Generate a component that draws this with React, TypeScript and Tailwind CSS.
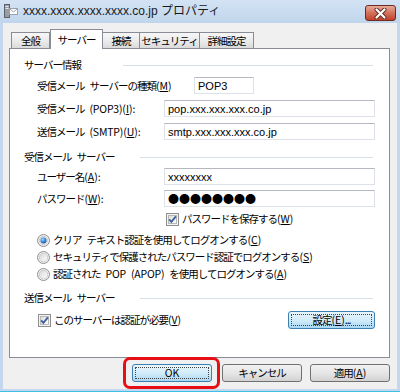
import React from "react";

function Check() {
  return (
    <svg width="13" height="13" viewBox="0 0 13 13" className="shrink-0">
      <defs>
        <linearGradient id="cbg" x1="0" y1="0" x2="1" y2="1">
          <stop offset="0" stopColor="#dcdcdc" />
          <stop offset="1" stopColor="#ffffff" />
        </linearGradient>
      </defs>
      <rect x="0.5" y="0.5" width="12" height="12" fill="#f4f4f4" stroke="#8e8f8f" />
      <rect x="2.5" y="2.5" width="8" height="8" fill="url(#cbg)" stroke="#b8b8b8" />
      <path d="M3.2 6.4 L5.4 8.9 L9.9 3.4" fill="none" stroke="#3c5d99" strokeWidth="1.8" />
    </svg>
  );
}

function Radio({ on }: { on?: boolean }) {
  return (
    <svg width="13" height="13" viewBox="0 0 13 13" className="shrink-0">
      <defs>
        <linearGradient id="rbg" x1="0" y1="0" x2="1" y2="1">
          <stop offset="0" stopColor="#d6d6d6" />
          <stop offset="1" stopColor="#ffffff" />
        </linearGradient>
        <radialGradient id="rdot" cx="0.4" cy="0.35" r="0.7">
          <stop offset="0" stopColor="#a9dcff" />
          <stop offset="0.5" stopColor="#3c8ce0" />
          <stop offset="1" stopColor="#164f9e" />
        </radialGradient>
      </defs>
      <circle cx="6.5" cy="6.5" r="6" fill="#f2f2f2" stroke="#8e8f8f" />
      <circle cx="6.5" cy="6.5" r="4.2" fill="url(#rbg)" stroke="#c4c4c4" strokeWidth="0.8" />
      {on && <circle cx="6.5" cy="6.5" r="3" fill="url(#rdot)" />}
    </svg>
  );
}

function Sp() {
  return <span className="inline-block w-[5px]" />;
}

function L({ children }: { children: React.ReactNode }) {
  return <span className="tracking-[-0.2px]">{children}</span>;
}

function K({ k }: { k: string }) {
  return (
    <span className="tracking-[0px]">
      (<u>{k}</u>)
    </span>
  );
}

function Tab({ label, w, sel }: { label: string; w: string; sel?: boolean }) {
  if (sel)
    return (
      <div
        className={`${w} relative z-10 -mb-px flex h-[20px] items-start justify-center whitespace-nowrap border border-b-0 border-[#898c95] bg-white pt-[2px] text-[10.5px] leading-[15px]`}
      >
        {label}
      </div>
    );
  return (
    <div
      className={`${w} -ml-px flex h-[16px] items-center justify-center whitespace-nowrap border border-b-0 border-[#898c95] bg-gradient-to-b from-[#f6f6f6] via-[#ececec] to-[#dadada] text-[10.5px] leading-[15px] first:ml-0`}
    >
      {label}
    </div>
  );
}

function Header({ children, line }: { children: React.ReactNode; line: string }) {
  return (
    <div className="flex h-[16px] items-center pl-[14px] pr-[16px]">
      <span className="whitespace-nowrap">{children}</span>
      <div className={`ml-auto h-px ${line} bg-[#d5dfe5]`} />
    </div>
  );
}

function Input({ children, w }: { children?: React.ReactNode; w: string }) {
  return (
    <div
      className={`${w} flex h-[17px] items-center border border-[#dde2e8] border-t-[#b5b8be] bg-white pl-[3px] font-['Liberation_Sans',sans-serif] text-[11px] tracking-normal`}
    >
      {children}
    </div>
  );
}

function Btn({
  children,
  blue,
  focus,
  w = "w-[80px]",
}: {
  children: React.ReactNode;
  blue?: boolean;
  focus?: boolean;
  w?: string;
}) {
  return (
    <div
      className={`${w} relative flex h-[18px] items-center justify-center rounded-[3px] border ${
        blue
          ? "border-[#3c7fb1] bg-gradient-to-b from-[#e8f5fc] via-[#d3ecfa] to-[#a8d7f3]"
          : "border-[#707070] bg-gradient-to-b from-[#f2f2f2] via-[#e6e6e6] to-[#d2d2d2]"
      } whitespace-nowrap text-[10.5px] leading-none`}
    >
      {focus && (
        <div className="absolute inset-[2px] border border-dotted border-[#444]" />
      )}
      <span className="relative">{children}</span>
    </div>
  );
}

export default function App() {
  return (
    <div className="flex h-[392px] w-[400px] flex-col bg-[#c4d7ee] font-['Noto_Sans_CJK_JP',sans-serif] text-black">
      {/* title bar */}
      <div className="flex h-[23px] shrink-0 items-start bg-gradient-to-b from-[#d3e3f4] to-[#c0d5ec] pl-[4px] pr-[4px]">
        <svg width="14" height="14" viewBox="0 0 14 14" className="mt-[4px] shrink-0">
          <rect x="0.5" y="0.5" width="5" height="13" fill="#9a9ea4" stroke="#5d6168" />
          <rect x="1.5" y="2" width="3" height="1" fill="#e8e8e8" />
          <rect x="1.5" y="4" width="3" height="1" fill="#e8e8e8" />
          <rect x="5.5" y="4.5" width="8" height="6" fill="#ffffff" stroke="#9aa2ac" />
          <path d="M5.5 4.5 L9.5 8 L13.5 4.5" fill="none" stroke="#9aa2ac" />
        </svg>
        <span className="ml-[5px] mt-[3px] font-['Liberation_Sans','Noto_Sans_CJK_JP',sans-serif] text-[12px] leading-[16px] text-[#1a1a1a]">
          xxxx.xxxx.xxxx.xxxx.co.jp プロパティ
        </span>
        <div className="ml-auto mt-[5px] flex h-[16px] w-[31px] items-center justify-center rounded-[3px] border border-[#6e2a20] bg-gradient-to-b from-[#e8a898] via-[#d2705a] to-[#c2402a]">
          <svg width="13" height="11" viewBox="0 0 13 11">
            <path d="M2.5 1.5 L10.5 9.5 M10.5 1.5 L2.5 9.5" stroke="#5b2a22" strokeWidth="4" strokeLinecap="round" />
            <path d="M2.5 1.5 L10.5 9.5 M10.5 1.5 L2.5 9.5" stroke="#ffffff" strokeWidth="2.2" strokeLinecap="round" />
          </svg>
        </div>
      </div>

      {/* client */}
      <div className="mx-[3px] flex h-[366px] flex-col bg-[#f0f0f0] text-[10.5px] tracking-[-1px]">
        {/* tabs */}
        <div className="flex h-[25px] items-end pl-[8px]">
          <Tab label="全般" w="w-[39px]" />
          <Tab label="サーバー" w="w-[53px]" sel />
          <Tab label="接続" w="w-[38px]" />
          <Tab label="セキュリティ" w="w-[61px]" />
          <Tab label="詳細設定" w="w-[55px]" />
        </div>

        {/* panel */}
        <div className="ml-[6px] flex h-[310px] w-[381px] flex-col border border-[#898c95] bg-white pt-[8px] leading-[16px]">
          <Header line="w-[250px]">サーバー情報</Header>
          <div className="mt-[4px] flex items-center pl-[27px]">
            <span className="w-[157px] whitespace-nowrap">
              受信メール<Sp />サーバーの種類<K k="M" />
            </span>
            <Input w="w-[60px]">POP3</Input>
          </div>
          <div className="mt-[6px] flex items-center pl-[27px]">
            <span className="w-[127px] whitespace-nowrap">
              受信メール<Sp /><L>(POP3)</L><K k="I" />:
            </span>
            <Input w="w-[211px]">pop.xxx.xxx.xxx.co.jp</Input>
          </div>
          <div className="mt-[6px] flex items-center pl-[27px]">
            <span className="w-[127px] whitespace-nowrap">
              送信メール<Sp /><L>(SMTP)</L><K k="U" />:
            </span>
            <Input w="w-[211px]">smtp.xxx.xxx.xxx.co.jp</Input>
          </div>

          <div className="mt-[9px]">
            <Header line="w-[233px]">
              受信メール<Sp />サーバー
            </Header>
          </div>
          <div className="mt-[3px] flex items-center pl-[27px]">
            <span className="w-[127px]">
              ユーザー名<K k="A" />:
            </span>
            <Input w="w-[211px]">xxxxxxxx</Input>
          </div>
          <div className="mt-[5px] flex items-center pl-[27px]">
            <span className="w-[127px]">
              パスワード<K k="W" />:
            </span>
            <Input w="w-[211px]">
              <span className="font-['Noto_Sans_CJK_JP',sans-serif] text-[11px] leading-none tracking-[0px]">
                ●●●●●●●●
              </span>
            </Input>
          </div>
          <div className="mt-[4px] flex h-[16px] items-center gap-[3px] pl-[156px]">
            <Check />
            <span className="whitespace-nowrap">
              パスワードを保存する<K k="W" />
            </span>
          </div>
          <div className="mt-[5px] flex h-[16px] items-center gap-[3px] pl-[27px]">
            <Radio on />
            <span className="whitespace-nowrap">
              クリア<Sp />テキスト認証を使用してログオンする<K k="C" />
            </span>
          </div>
          <div className="mt-[1px] flex h-[16px] items-center gap-[3px] pl-[27px]">
            <Radio />
            <span className="whitespace-nowrap">
              セキュリティで保護されたパスワード認証でログオンする<K k="S" />
            </span>
          </div>
          <div className="mt-[1px] flex h-[16px] items-center gap-[3px] pl-[27px]">
            <Radio />
            <span className="whitespace-nowrap">
              認証された<Sp /><L>POP</L><Sp /><L>(APOP)</L><Sp />を使用してログオンする<K k="A" />
            </span>
          </div>

          <div className="mt-[8px]">
            <Header line="w-[233px]">
              送信メール<Sp />サーバー
            </Header>
          </div>
          <div className="mt-[5px] flex items-center pl-[28px] pr-[14px]">
            <Check />
            <span className="ml-[3px] whitespace-nowrap">
              このサーバーは認証が必要<K k="V" />
            </span>
            <div className="ml-auto">
              <Btn blue focus w="w-[87px]">
                設定<K k="E" />...
              </Btn>
            </div>
          </div>
        </div>

        {/* bottom buttons */}
        <div className="mt-[6px] flex justify-end pr-[7px]">
          <div className="relative">
            <div className="pointer-events-none absolute -left-[9px] -top-[7px] z-10 h-[32px] w-[97px] rounded-[7px] border-[3px] border-[#e60f14]" />
            <Btn blue focus>
              <span className="tracking-[0px]">OK</span>
            </Btn>
          </div>
          <div className="ml-[10px]">
            <Btn>キャンセル</Btn>
          </div>
          <div className="ml-[8px]">
            <Btn>
              適用<K k="A" />
            </Btn>
          </div>
        </div>
      </div>
      <div className="flex-1 border-b border-[#3cc0e6]" />
    </div>
  );
}
